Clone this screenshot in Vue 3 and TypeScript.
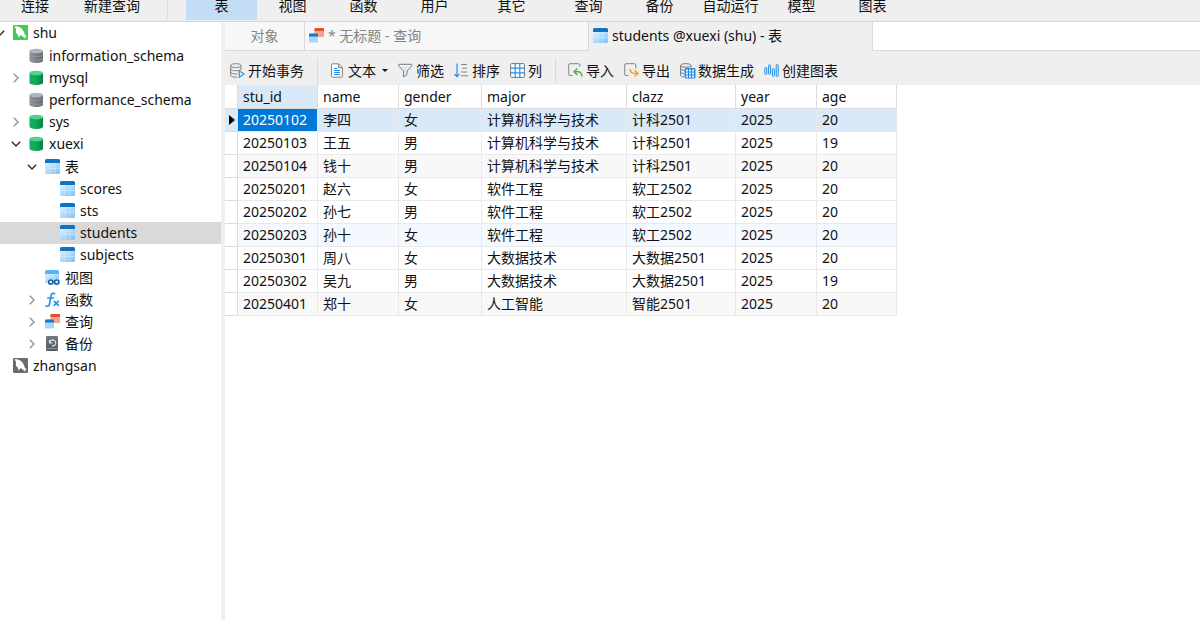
<script setup lang="ts">
import { ref } from 'vue'

interface TreeNode {
  label: string
  icon: string
  depth: number
  state?: 'open' | 'closed'
  groupStart?: boolean
}

const modules = ['视图', '函数', '用户', '其它', '查询', '备份', '自动运行', '模型', '图表']

const tree: TreeNode[] = [
  { label: 'shu', icon: 'conn-on', depth: 0, state: 'open' },
  { label: 'information_schema', icon: 'db-off', depth: 1, groupStart: true },
  { label: 'mysql', icon: 'db-on', depth: 1, state: 'closed' },
  { label: 'performance_schema', icon: 'db-off', depth: 1 },
  { label: 'sys', icon: 'db-on', depth: 1, state: 'closed' },
  { label: 'xuexi', icon: 'db-on', depth: 1, state: 'open' },
  { label: '表', icon: 'table', depth: 2, state: 'open', groupStart: true },
  { label: 'scores', icon: 'table', depth: 3 },
  { label: 'sts', icon: 'table', depth: 3 },
  { label: 'students', icon: 'table', depth: 3 },
  { label: 'subjects', icon: 'table', depth: 3 },
  { label: '视图', icon: 'view', depth: 2, groupStart: true },
  { label: '函数', icon: 'fx', depth: 2, state: 'closed' },
  { label: '查询', icon: 'query', depth: 2, state: 'closed' },
  { label: '备份', icon: 'backup', depth: 2, state: 'closed' },
  { label: 'zhangsan', icon: 'conn-off', depth: 0 },
]

const selectedNode = ref('students')

const columns = ['stu_id', 'name', 'gender', 'major', 'clazz', 'year', 'age']

const rows = [
  ['20250102', '李四', '女', '计算机科学与技术', '计科2501', '2025', '20'],
  ['20250103', '王五', '男', '计算机科学与技术', '计科2501', '2025', '19'],
  ['20250104', '钱十', '男', '计算机科学与技术', '计科2501', '2025', '20'],
  ['20250201', '赵六', '女', '软件工程', '软工2502', '2025', '20'],
  ['20250202', '孙七', '男', '软件工程', '软工2502', '2025', '20'],
  ['20250203', '孙十', '女', '软件工程', '软工2502', '2025', '20'],
  ['20250301', '周八', '女', '大数据技术', '大数据2501', '2025', '20'],
  ['20250302', '吴九', '男', '大数据技术', '大数据2501', '2025', '19'],
  ['20250401', '郑十', '女', '人工智能', '智能2501', '2025', '20'],
]

const activeCell = ref({ row: 0, col: 0 })

function rowTone(index: number): string {
  if (index === activeCell.value.row) return 'current'
  if (index === 5) return 'hover'
  return index % 6 === 2 ? 'shade' : ''
}
</script>

<template>
  <svg class="sprite" aria-hidden="true">
    <defs>
      <linearGradient id="g-green" x1="0" x2="1"><stop offset="0" stop-color="#12b05e" /><stop offset="0.5" stop-color="#10a857" /><stop offset="1" stop-color="#04813c" /></linearGradient>
      <linearGradient id="g-gray" x1="0" x2="1"><stop offset="0" stop-color="#8d949c" /><stop offset="1" stop-color="#666d76" /></linearGradient>
      <linearGradient id="g-blue" x1="0" y1="0" x2="1" y2="1"><stop offset="0" stop-color="#dcf0ff" /><stop offset="1" stop-color="#7cc1fb" /></linearGradient>
      <linearGradient id="g-dark" x1="0" x2="0" y1="0" y2="1"><stop offset="0" stop-color="#737a81" /><stop offset="1" stop-color="#4f565d" /></linearGradient>
    </defs>
    <symbol id="i-conn-on" viewBox="0 0 16 16">
      <rect width="15" height="15" rx="1" fill="#43cb50" />
      <path d="M1.500 1.200C6 .8 9.600 3 11 7.200l.9 2.600 2.300 2-2.200-.2.500 2.400-3.600-3.200-1.900-.5L6 12.800 4.600 9.500 2.900 7.800 3 4Z" fill="#fff" />
    </symbol>
    <symbol id="i-conn-off" viewBox="0 0 16 16">
      <rect width="15" height="15" rx="1" fill="#6b6b6b" />
      <path d="M1.500 1.200C6 .8 9.600 3 11 7.200l.9 2.600 2.300 2-2.200-.2.500 2.400-3.600-3.200-1.900-.5L6 12.800 4.600 9.500 2.900 7.800 3 4Z" fill="#fff" />
    </symbol>
    <symbol id="i-db-on" viewBox="0 0 16 16">
      <path d="M.5 3v9.500C.5 14 3.500 15 7.500 15s6.500-1 6.500-2.500V3Z" fill="url(#g-green)" />
      <ellipse cx="7.250" cy="3" rx="6.750" ry="2.300" fill="#52d08d" />
    </symbol>
    <symbol id="i-db-off" viewBox="0 0 16 16">
      <path d="M.5 3v9.500C.5 14 3.500 15 7.500 15s6.500-1 6.500-2.500V3Z" fill="url(#g-gray)" />
      <ellipse cx="7.250" cy="3" rx="6.750" ry="2.300" fill="#b0b6bc" />
      <path d="M.5 7c2 2 11.500 2 13.500 0M.5 10.800c2 2 11.500 2 13.500 0" fill="none" stroke="#a3a9b0" stroke-width=".5" />
    </symbol>
    <symbol id="i-table" viewBox="0 0 16 16">
      <path d="M0 4h15v9.500a1.500 1.500 0 0 1-1.500 1.500h-12A1.500 1.500 0 0 1 0 13.500Z" fill="url(#g-blue)" />
      <path d="M5 4v11M10 4v11M0 9.500h15" stroke="#e3f3ff" stroke-width=".4" />
      <path d="M0 4V1.500A1.500 1.500 0 0 1 1.500 0h12A1.500 1.500 0 0 1 15 1.500V4Z" fill="#0f73c4" />
    </symbol>
    <symbol id="i-view" viewBox="0 0 16 16">
      <path d="M0 4h14v9H0Z" fill="url(#g-blue)" />
      <path d="M0 4V1.500A1.500 1.500 0 0 1 1.500 0h11A1.500 1.500 0 0 1 14 1.500V4Z" fill="#55b2f6" />
      <path d="M3 9.500h12v5H3Z" fill="#c5e5fd" />
      <g fill="#d9eeff" stroke="#0e5fae" stroke-width="1.500"><circle cx="5.800" cy="12" r="2.100" /><circle cx="11.700" cy="12" r="2.100" /><path d="M7.900 11.500h1.700" /></g>
    </symbol>
    <symbol id="i-fx" viewBox="0 0 16 16">
      <path d="M9.500 1.600C7.600.8 6.600 1.600 6.200 3.600L4.500 12c-.4 1.900-1.500 2.700-3.500 2M2.800 6h5.700" fill="none" stroke="#2196ec" stroke-width="1.700" stroke-linecap="round" />
      <path d="m8.800 8.800 5 5M13.800 8.800l-5 5" stroke="#2196ec" stroke-width="1.700" />
    </symbol>
    <symbol id="i-query" viewBox="0 0 16 16">
      <rect x="5.500" width="9.500" height="9" rx="1" fill="#f6a18a" />
      <path d="M5.500 3V1a1 1 0 0 1 1-1H14a1 1 0 0 1 1 1v2Z" fill="#e2502d" />
      <rect y="5.500" width="9" height="9" rx="1" fill="#a5d6fc" />
      <path d="M0 8.500v-2a1 1 0 0 1 1-1h7a1 1 0 0 1 1 1v2Z" fill="#1178cb" />
    </symbol>
    <symbol id="i-backup" viewBox="0 0 16 16">
      <rect x="1" width="12" height="15" rx="1.200" fill="url(#g-dark)" />
      <path d="M4.500 4v3h3M4.800 6.800A3 3 0 1 1 7 9.800" fill="none" stroke="#e8eaec" stroke-width="1.100" />
      <path d="M1.500 12.600h11" stroke="#a2a8ae" stroke-width=".8" />
    </symbol>
    <symbol id="i-begin" viewBox="0 0 16 16">
      <g fill="none" stroke="#858585"><ellipse cx="5.800" cy="2.600" rx="5.200" ry="2" /><path d="M.6 2.600v9.600c0 1.100 2.400 2 5.200 2h1.400M11 2.600v4.200M.6 5.800c0 1.100 2.300 2 5.200 2S11 6.900 11 5.800M.6 9c0 1.100 2.300 2 5.200 2h1.700" /></g>
      <path d="M9.300 7.800v6.400l4.700-3.200Z" fill="#e6f4ff" stroke="#2590e8" stroke-width="1.100" />
    </symbol>
    <symbol id="i-text" viewBox="0 0 16 16">
      <path d="M2.500.8h6l3.900 3.900v8.500a1 1 0 0 1-1 1h-8.900a1 1 0 0 1-1-1V1.800a1 1 0 0 1 1-1ZM8.500.8v4h3.900" fill="#fafafa" stroke="#858585" />
      <path d="M4 5.500h3M4 7.500h6M4 9.500h6M4 11.500h6" stroke="#2690e8" stroke-width="1.100" />
    </symbol>
    <symbol id="i-filter" viewBox="0 0 16 16">
      <path d="M.8 1.300h12.900v1.500L9 8v3.500L5.500 14V8L.8 2.800Z" fill="#fafafa" stroke="#777" />
      <path d="m2.800 3.500 3.700 4v4.700l1.500-1V7.500l3.700-4Z" fill="#cfe8fc" />
    </symbol>
    <symbol id="i-sort" viewBox="0 0 16 16">
      <path d="M3 .5v13M.5 11 3 13.700 5.500 11" fill="none" stroke="#2690e8" stroke-width="1.200" />
      <path d="M7 1.500h6M8 5.200h5M7 9h6M7 12.800h7" stroke="#858585" />
    </symbol>
    <symbol id="i-columns" viewBox="0 0 16 16">
      <rect x=".6" y=".6" width="13.800" height="13.800" rx="1" fill="#fff" stroke="#777" />
      <path d="M5.200 1v13.500M9.800 1v13.500M1 5.200h13.500M1 9.800h13.500" stroke="#2690e8" stroke-width="1.200" />
    </symbol>
    <symbol id="i-import" viewBox="0 0 16 16">
      <path d="M4.500 12.500H2A1.300 1.300 0 0 1 .7 11.200V2A1.300 1.300 0 0 1 2 .7h8.500A1.300 1.300 0 0 1 11.800 2v1.500" fill="none" stroke="#858585" />
      <path d="M9.500 5.500 6 8.700l3.500 3.200M6.200 8.700h3.600c2.600 0 4 1.700 4 4.800" fill="none" stroke="#52b043" stroke-width="1.400" />
    </symbol>
    <symbol id="i-export" viewBox="0 0 16 16">
      <path d="M4.500 12.500H2A1.300 1.300 0 0 1 .7 11.200V2A1.300 1.300 0 0 1 2 .7h8.500A1.300 1.300 0 0 1 11.800 2v3.500" fill="none" stroke="#858585" />
      <path d="m10.500 7.200 3.500 3.200-3.500 3.200M13.800 10.400h-3.600c-2.500 0-4-1.400-4-4.400" fill="none" stroke="#f0982c" stroke-width="1.400" />
    </symbol>
    <symbol id="i-generate" viewBox="0 0 16 16">
      <g fill="none" stroke="#777"><ellipse cx="5.800" cy="2.400" rx="5.200" ry="1.800" /><path d="M.6 2.400v9.800c0 1 1.600 1.600 3.400 1.800M11 2.400v2M.6 5.500c0 1 1.600 1.700 3.600 1.900M.6 8.800c0 1 1.600 1.700 3.600 1.900" /></g>
      <rect x="4.500" y="5" width="11" height="10.500" rx="1.500" fill="#1f8be6" />
      <path d="M6 6.500h2v2H6ZM9 6.500h2v2H9ZM12 6.500h2v2h-2ZM6 9.500h2v2H6ZM9 9.500h2v2H9ZM12 9.500h2v2h-2ZM6 12.500h2v2H6ZM9 12.500h2v2H9ZM12 12.500h2v2h-2Z" fill="#e8f4ff" />
    </symbol>
    <symbol id="i-chart" viewBox="0 0 16 16">
      <g fill="#d8edff" stroke="#2690e8"><rect x=".8" y="4.500" width="2" height="7" rx="1" /><rect x="4.600" y="1.800" width="2" height="9.500" rx="1" /><rect x="8.400" y="5.500" width="2" height="8" rx="1" /><rect x="12.200" y="1.500" width="2" height="12" rx="1" /></g>
    </symbol>
  </svg>

  <div class="app">
    <nav class="modules" aria-label="主工具栏">
      <button type="button" class="connect">连接</button>
      <button type="button" class="new-query">新建查询</button>
      <span class="rule" />
      <button type="button" class="module active">表</button>
      <button v-for="name in modules" :key="name" type="button" class="module" :class="{ wide: name === '其它' }">{{ name }}</button>
    </nav>

    <div class="body">
      <aside class="sidebar">
        <ul class="tree">
          <li
            v-for="node in tree"
            :key="node.label"
            class="node"
            :class="['depth-' + node.depth, { 'group-start': node.groupStart, selected: node.label === selectedNode }]"
          >
            <button type="button" class="twisty" :class="node.state" :disabled="!node.state" :aria-label="'展开 ' + node.label">
              <svg v-if="node.state === 'open'" viewBox="0 0 10 10"><path d="M.8 2.800 5 7l4.200-4.200" /></svg>
              <svg v-else-if="node.state === 'closed'" viewBox="0 0 10 10"><path d="M2.800.8 7 5 2.800 9.200" /></svg>
            </button>
            <button type="button" class="entry" @click="selectedNode = node.label">
              <svg class="icon"><use :href="'#i-' + node.icon" /></svg>
              <span>{{ node.label }}</span>
            </button>
          </li>
        </ul>
      </aside>

      <main class="content">
        <div class="tabs">
          <button type="button" class="tab objects">对象</button>
          <button type="button" class="tab doc">
            <svg class="icon"><use href="#i-query" /></svg><span>* 无标题 - 查询</span>
          </button>
          <button type="button" class="tab doc current">
            <svg class="icon"><use href="#i-table" /></svg><span>students @xuexi (shu) - 表</span>
          </button>
          <span class="tab-rest" />
        </div>

        <div class="toolbar">
          <button type="button" class="tool"><svg class="icon"><use href="#i-begin" /></svg>开始事务</button>
          <span class="rule" />
          <button type="button" class="tool"><svg class="icon"><use href="#i-text" /></svg>文本<span class="caret" /></button>
          <button type="button" class="tool"><svg class="icon"><use href="#i-filter" /></svg>筛选</button>
          <button type="button" class="tool"><svg class="icon"><use href="#i-sort" /></svg>排序</button>
          <button type="button" class="tool"><svg class="icon"><use href="#i-columns" /></svg>列</button>
          <span class="rule" />
          <button type="button" class="tool"><svg class="icon"><use href="#i-import" /></svg>导入</button>
          <button type="button" class="tool"><svg class="icon"><use href="#i-export" /></svg>导出</button>
          <button type="button" class="tool"><svg class="icon"><use href="#i-generate" /></svg>数据生成</button>
          <button type="button" class="tool"><svg class="icon"><use href="#i-chart" /></svg>创建图表</button>
        </div>

        <table class="grid">
          <colgroup>
            <col class="c-mark" /><col class="c-id" /><col class="c-name" /><col class="c-gender" />
            <col class="c-major" /><col class="c-clazz" /><col class="c-year" /><col class="c-age" />
          </colgroup>
          <thead>
            <tr>
              <td class="mark" />
              <th v-for="(col, c) in columns" :key="col" scope="col" :class="{ current: c === activeCell.col }">{{ col }}</th>
            </tr>
          </thead>
          <tbody>
            <tr v-for="(row, r) in rows" :key="row[0]" :class="rowTone(r)">
              <td class="mark"><span v-if="r === activeCell.row" class="pointer" /></td>
              <td
                v-for="(value, c) in row"
                :key="c"
                :class="{ active: r === activeCell.row && c === activeCell.col }"
                @click="activeCell = { row: r, col: c }"
              >{{ value }}</td>
            </tr>
          </tbody>
        </table>
      </main>
    </div>
  </div>
</template>

<style>
body {
  margin: 0;
  background: #fff;
}
</style>

<style scoped>
.app {
  display: flex;
  flex-direction: column;
  min-height: 100vh;
  background: #fff;
  color: #111;
  font: 14px/20px "Noto Sans", "Noto Sans CJK SC", sans-serif;
}

.sprite {
  position: absolute;
  width: 0;
  height: 0;
}

button {
  margin: 0;
  padding: 0;
  border: 0;
  background: none;
  color: inherit;
  font: inherit;
  white-space: nowrap;
}

.icon {
  flex: none;
  width: 16px;
  height: 16px;
}

/* main toolbar */
.modules {
  display: flex;
  box-sizing: border-box;
  height: 22px;
  border-bottom: 1px solid #d6d6d6;
  background: #efefef;
}

.modules button {
  height: 20px;
  padding-bottom: 8px;
  line-height: 12px;
}

.connect {
  width: 70px;
}

.new-query {
  width: 84px;
}

.modules .rule {
  width: 1px;
  margin: 0 18px 2px 13px;
  background: #dcdcdc;
}

.module {
  width: 71px;
}

.module.wide {
  width: 83px;
}

.module.active {
  background: #c3def4;
}

.body {
  display: flex;
  flex: 1;
}

/* navigation tree */
.sidebar {
  flex: none;
  width: 221px;
  border-right: 4px solid #efefef;
}

.tree {
  margin: 0;
  padding: 0;
  list-style: none;
}

.node {
  display: flex;
  align-items: center;
  height: 22px;
}

.group-start {
  margin-top: 1px;
}

.node.selected {
  background: #d9d9d9;
}

.twisty {
  flex: none;
  width: 10px;
  height: 10px;
  margin-right: 8px;
}

.depth-0 .twisty {
  margin-left: -5px;
}

.depth-1 .twisty {
  margin-left: 11px;
}

.depth-2 .twisty {
  margin-left: 27px;
}

.depth-3 .twisty {
  margin-left: 42px;
}

.twisty svg {
  display: block;
  fill: none;
  stroke: #9a9a9a;
  stroke-width: 1.5;
}

.twisty.open svg {
  stroke: #333;
}

.entry {
  display: flex;
  flex: 1;
  align-items: center;
  gap: 4px;
  text-align: left;
}

/* document tabs */
.content {
  flex: 1;
  min-width: 0;
}

.tabs {
  display: flex;
  height: 29px;
}

.tab {
  display: flex;
  align-items: center;
  box-sizing: border-box;
  border-right: 1px solid #dadada;
  border-bottom: 1px solid #dadada;
  background: #f7f7f7;
  color: #858585;
}

.tab.objects {
  justify-content: center;
  width: 80px;
}

.tab.doc {
  gap: 3px;
  width: 284px;
  padding-left: 4px;
}

.tab.current {
  border-bottom-color: #efefef;
  background: #efefef;
  color: #111;
}

.tab-rest {
  flex: 1;
  border-bottom: 1px solid #dadada;
}

/* table toolbar */
.toolbar {
  display: flex;
  align-items: center;
  box-sizing: border-box;
  gap: 10px;
  height: 34px;
  padding: 5px 5px 0;
  background: #efefef;
}

.tool {
  display: flex;
  align-items: center;
  gap: 2px;
}

.toolbar .rule {
  width: 1px;
  height: 26px;
  margin: 0 2px 0 3px;
  background: #dadada;
}

.caret {
  margin-left: 4px;
  border: 3px solid transparent;
  border-top-color: #111;
  border-bottom: 0;
}

/* data grid */
.grid {
  width: 672px;
  border-collapse: separate;
  border-spacing: 0;
  table-layout: fixed;
}

.c-mark { width: 13px; }
.c-id { width: 80px; }
.c-name { width: 81px; }
.c-gender { width: 83px; }
.c-major { width: 145px; }
.c-clazz { width: 109px; }
.c-year { width: 81px; }
.c-age { width: 80px; }

.grid th,
.grid td {
  box-sizing: border-box;
  height: 23px;
  padding: 0 0 0 5px;
  border-right: 1px solid #e9e9e9;
  border-bottom: 1px solid #e9e9e9;
  font-weight: 400;
  line-height: 22px;
  text-align: left;
  white-space: nowrap;
}

.grid th {
  height: 24px;
  border-color: #dcdcdc;
}

.grid th.current,
.current td {
  background: #d9e9f8;
}

.shade td {
  background: #f8f8f8;
}

.hover td {
  background: #f3f9fe;
}

.grid td.mark {
  padding: 0 0 0 4px;
  border-color: #dcdcdc;
  background: #fff;
}

.grid .current td.mark {
  background: #d9e9f8;
}

.grid td.active {
  background: #0078d7;
  color: #fff;
}

.pointer {
  display: block;
  width: 0;
  border: 5px solid transparent;
  border-right: 0;
  border-left: 6px solid #000;
}
</style>
